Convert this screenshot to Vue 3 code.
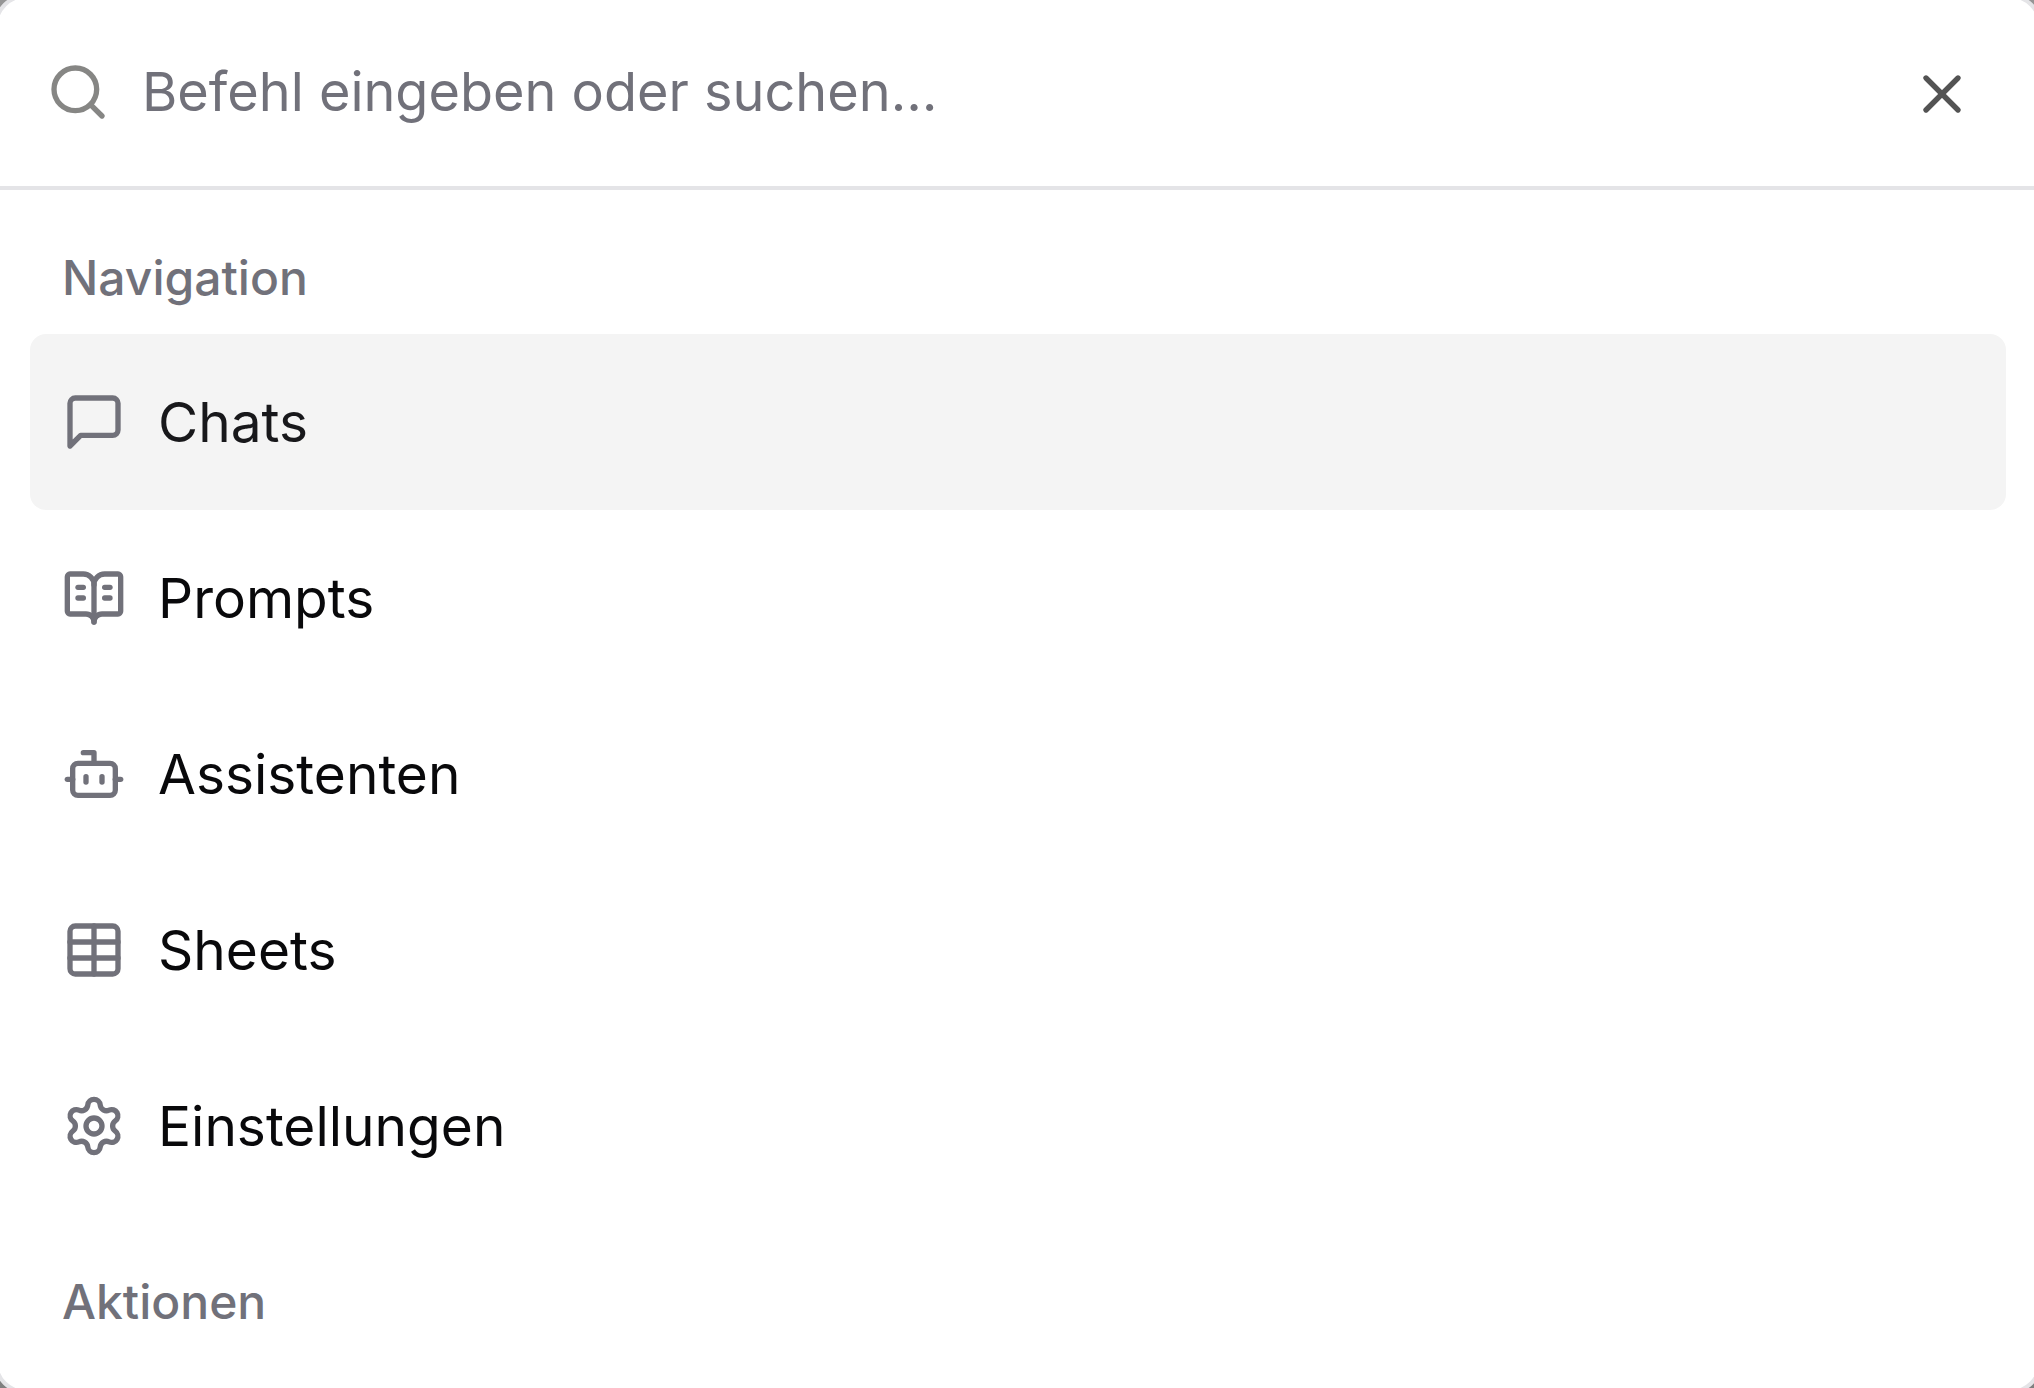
<script setup>
import { ref } from 'vue'

const query = ref('')

const navigation = [
  {
    label: 'Chats',
    active: true,
    paths: ['M21 15a2 2 0 0 1-2 2H7l-4 4V5a2 2 0 0 1 2-2h14a2 2 0 0 1 2 2z'],
  },
  {
    label: 'Prompts',
    paths: [
      'M12 7v14',
      'M16 12h2',
      'M16 8h2',
      'M3 18a1 1 0 0 1-1-1V4a1 1 0 0 1 1-1h5a4 4 0 0 1 4 4 4 4 0 0 1 4-4h5a1 1 0 0 1 1 1v13a1 1 0 0 1-1 1h-6a3 3 0 0 0-3 3 3 3 0 0 0-3-3z',
      'M6 12h2',
      'M6 8h2',
    ],
  },
  {
    label: 'Assistenten',
    paths: [
      'M12 8V4H8',
      'M6 8h12a2 2 0 0 1 2 2v8a2 2 0 0 1-2 2H6a2 2 0 0 1-2-2v-8a2 2 0 0 1 2-2z',
      'M2 14h2',
      'M20 14h2',
      'M15 13v2',
      'M9 13v2',
    ],
  },
  {
    label: 'Sheets',
    paths: [
      'M5 3h14a2 2 0 0 1 2 2v14a2 2 0 0 1-2 2H5a2 2 0 0 1-2-2V5a2 2 0 0 1 2-2z',
      'M12 3v18',
      'M3 9h18',
      'M3 15h18',
    ],
  },
  {
    label: 'Einstellungen',
    paths: [
      'M9.671 4.136a2.34 2.34 0 0 1 4.659 0 2.34 2.34 0 0 0 3.319 1.915 2.34 2.34 0 0 1 2.33 4.033 2.34 2.34 0 0 0 0 3.831 2.34 2.34 0 0 1-2.33 4.033 2.34 2.34 0 0 0-3.319 1.915 2.34 2.34 0 0 1-4.659 0 2.34 2.34 0 0 0-3.32-1.915 2.34 2.34 0 0 1-2.33-4.033 2.34 2.34 0 0 0 0-3.831A2.34 2.34 0 0 1 6.35 6.051a2.34 2.34 0 0 0 3.319-1.915',
      'M12 9a3 3 0 1 0 0 6 3 3 0 1 0 0-6z',
    ],
  },
]
</script>

<template>
  <main class="backdrop">
    <section class="palette" role="dialog" aria-label="Befehlspalette">
      <header class="search">
        <svg class="icon search-icon" viewBox="0 0 24 24" aria-hidden="true">
          <circle cx="11" cy="11" r="8" />
          <path d="m21 21-4.3-4.3" />
        </svg>
        <input
          v-model="query"
          class="search-input"
          type="text"
          aria-label="Befehl eingeben oder suchen"
          placeholder="Befehl eingeben oder suchen…"
        />
        <button class="close" type="button" aria-label="Schließen">
          <svg class="icon" viewBox="0 0 24 24" aria-hidden="true">
            <path d="M18 6 6 18" />
            <path d="m6 6 12 12" />
          </svg>
        </button>
      </header>

      <div class="groups">
        <section>
          <h2 class="heading">Navigation</h2>
          <ul class="items">
            <li v-for="item in navigation" :key="item.label">
              <button type="button" class="item" :class="{ active: item.active }">
                <svg class="icon" viewBox="0 0 24 24" aria-hidden="true">
                  <path v-for="d in item.paths" :key="d" :d="d" />
                </svg>
                <span>{{ item.label }}</span>
              </button>
            </li>
          </ul>
        </section>
        <section>
          <h2 class="heading">Aktionen</h2>
        </section>
      </div>
    </section>
  </main>
</template>

<style>
body {
  margin: 0;
  overflow: hidden;
}
</style>

<style scoped>
.backdrop {
  display: flex;
  height: 100vh;
  overflow: hidden;
  background: linear-gradient(#959595, #808080);
  font-family: Inter, "Liberation Sans", sans-serif;
}

/* The dialog's frame bleeds past the window, leaving only its rounded corners visible */
.palette {
  flex: 1;
  box-sizing: border-box;
  margin: -6px -8px -6px -6px;
  border: 4px solid #e4e4e7;
  border-radius: 32px;
  background: #fff;
}

.search {
  display: flex;
  align-items: center;
  gap: 32px;
  height: 188px;
  padding: 0 64px 0 48px;
  border-bottom: 4px solid #e4e4e7;
}

.icon {
  display: block;
  flex: none;
  width: 64px;
  height: 64px;
  fill: none;
  stroke: currentColor;
  stroke-width: 2;
  stroke-linecap: round;
  stroke-linejoin: round;
}

.search-icon {
  color: #868684;
}

.search-input {
  flex: 1;
  min-width: 0;
  padding: 0;
  border: 0;
  outline: 0;
  background: transparent;
  color: #09090b;
  font: 400 54px/80px Inter, "Liberation Sans", sans-serif;
}

.search-input::placeholder {
  color: #71717a;
  opacity: 1;
}

.close {
  padding: 4px 0 0;
  border: 0;
  background: transparent;
  color: #535353;
}

.groups {
  display: flex;
  flex-direction: column;
  gap: 32px;
  padding: 32px;
}

.heading {
  margin: 0;
  padding: 24px 32px;
  color: #71717a;
  font-size: 48px;
  font-weight: 500;
  line-height: 64px;
}

.items {
  margin: 0;
  padding: 0;
  list-style: none;
}

.item {
  display: flex;
  align-items: center;
  gap: 32px;
  width: 100%;
  height: 176px;
  padding: 0 32px;
  border: 0;
  border-radius: 16px;
  background: transparent;
  color: #09090b;
  font: 400 55px/80px Inter, "Liberation Sans", sans-serif;
  text-align: left;
}

.item.active {
  background: #f4f4f4;
  color: #18181b;
}

.item .icon {
  color: #71717a;
}
</style>
